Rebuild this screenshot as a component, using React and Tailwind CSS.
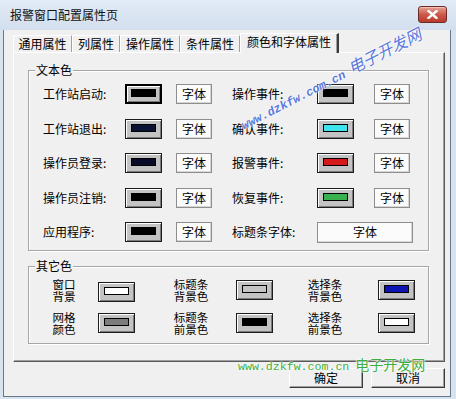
import React from 'react';

const leftRows = [
  { label: '工作站启动:', swatch: 'bg-[#000000]', focus: true, gap: '' },
  { label: '工作站退出:', swatch: 'bg-[#0c1232]', gap: 'mt-[15px]' },
  { label: '操作员登录:', swatch: 'bg-[#080c26]', gap: 'mt-[14px]' },
  { label: '操作员注销:', swatch: 'bg-[#000000]', gap: 'mt-[15px]' },
  { label: '应用程序:', swatch: 'bg-[#000000]', gap: 'mt-[14px]' },
];

const rightRows = [
  { label: '操作事件:', swatch: 'bg-[#000000]' },
  { label: '确认事件:', swatch: 'bg-[#3fe4ea]' },
  { label: '报警事件:', swatch: 'bg-[#d41a1a]' },
  { label: '恢复事件:', swatch: 'bg-[#38b24c]' },
];

function ColorBtn({ swatch, focus }) {
  return (
    <div
      className={`w-[37px] h-[20px] shrink-0 flex justify-center bg-[#c3c3c3] ${
        focus
          ? 'border-2 border-black pt-[3px] shadow-[inset_1px_1px_0_#ffffff,inset_-1px_-1px_0_#7a7a7a]'
          : 'border border-[#1c1c1c] pt-[4px] shadow-[inset_1px_1px_0_#ffffff,inset_-1px_-1px_0_#7a7a7a]'
      }`}
    >
      <div className={`w-[25px] h-[8px] border border-black ${swatch}`} />
    </div>
  );
}

function FontBtn({ wide }) {
  return (
    <div
      className={`${wide ? 'w-[96px] h-[21px]' : 'w-[36px] h-[20px]'} shrink-0 flex items-center justify-center border border-[#8e8e8e] bg-[#fbfbfb] shadow-[inset_-1px_-1px_0_#d6d6d6] leading-none`}
    >
      字体
    </div>
  );
}

function GroupBox({ title, className, children }) {
  return (
    <div className={`relative w-[401px] border border-[#a6a6a6] shadow-[inset_1px_1px_0_#ffffff,1px_1px_0_#ffffff] ${className}`}>
      <span className="absolute -top-[9px] left-[6px] px-[1px] bg-[#f0f0f0] leading-[16px]">{title}</span>
      {children}
    </div>
  );
}

function TwoLine({ a, b, w }) {
  return (
    <div className={`${w} h-[24px] shrink-0 flex flex-col items-center text-[11.5px] leading-[12px]`}>
      <span>{a}</span>
      <span>{b}</span>
    </div>
  );
}

function Tab({ label, w }) {
  return (
    <div className={`${w} h-[17px] flex items-center justify-center border-l border-t border-white border-r border-r-[#a0a0a0] shadow-[1px_0_0_#696969]`}>
      {label}
    </div>
  );
}

export default function App() {
  return (
    <div className="relative w-[456px] h-[399px] overflow-hidden flex flex-col bg-[#d8e3f0] font-['Noto_Sans_CJK_SC','Noto_Sans',sans-serif] text-[12px] text-black">
      {/* title bar */}
      <div className="h-[30px] shrink-0 flex items-center justify-between pl-[10px] pr-[9px] bg-gradient-to-b from-[#e2ebf6] to-[#d3dfee]">
        <span className="text-[12px] text-[#111] pb-[1px]">报警窗口配置属性页</span>
        <div className="w-[29px] h-[17px] mb-[2px] rounded-[3px] border border-[#6e2b24] bg-gradient-to-b from-[#e3a295] via-[#cb5a4b] to-[#b83a2c] flex items-center justify-center shadow-[inset_0_1px_0_#f0c0b6]">
          <svg width="11" height="9" viewBox="0 0 11 9">
            <path d="M1.5 1 L9.5 8 M9.5 1 L1.5 8" stroke="#ffffff" strokeWidth="2.4" strokeLinecap="square" />
          </svg>
        </div>
      </div>

      {/* client */}
      <div className="ml-[3px] w-[448px] h-[367px] border-x border-b border-[#66788c] bg-[#f0f0f0] pt-[3px] pl-[9px]">
        {/* tabs */}
        <div className="h-[19px] flex items-end">
          <Tab label="通用属性" w="w-[59px]" />
          <Tab label="列属性" w="w-[48px]" />
          <Tab label="操作属性" w="w-[60px]" />
          <Tab label="条件属性" w="w-[60px]" />
          <div className="relative z-10 w-[99px] h-[20px] -mb-[1px] flex items-center justify-center pb-[3px] bg-[#f0f0f0] border-l border-t border-white border-r-2 border-r-[#3c3c3c] shadow-[inset_-1px_0_0_#a0a0a0]">
            颜色和字体属性
          </div>
        </div>

        {/* page */}
        <div className="w-[432px] h-[310px] border border-t-white border-l-white border-r-[#5a5a5a] border-b-[#5a5a5a] shadow-[inset_-1px_-1px_0_#a0a0a0] pl-[14px] pt-[17px]">
          <GroupBox title="文本色" className="h-[181px] pt-[13px] pl-[14px]">
            {leftRows.map((r, i) => (
              <div key={r.label} className={`flex items-center h-[20px] ${r.gap}`}>
                <span className="w-[82px] shrink-0">{r.label}</span>
                <ColorBtn swatch={r.swatch} focus={r.focus} />
                <div className="ml-[14px]"><FontBtn /></div>
                <span className="ml-[20px] w-[85px] shrink-0">{i < 4 ? rightRows[i].label : '标题条字体:'}</span>
                {i < 4 ? (
                  <>
                    <ColorBtn swatch={rightRows[i].swatch} />
                    <div className="ml-[20px]"><FontBtn /></div>
                  </>
                ) : (
                  <FontBtn wide />
                )}
              </div>
            ))}
          </GroupBox>

          <GroupBox title="其它色" className="h-[78px] mt-[15px] pt-[11px] pl-[23px]">
            <div className="flex items-center h-[24px]">
              <TwoLine a="窗口" b="背景" w="w-[24px]" />
              <div className="ml-[22px] mt-[3px]"><ColorBtn swatch="bg-[#ffffff]" /></div>
              <div className="ml-[38px]"><TwoLine a="标题条" b="背景色" w="w-[36px]" /></div>
              <div className="ml-[27px]"><ColorBtn swatch="bg-[#c4c4c4]" /></div>
              <div className="ml-[34px]"><TwoLine a="选择条" b="背景色" w="w-[36px]" /></div>
              <div className="ml-[35px]"><ColorBtn swatch="bg-[#0c14b4]" /></div>
            </div>
            <div className="flex items-center h-[24px] mt-[9px]">
              <TwoLine a="网格" b="颜色" w="w-[24px]" />
              <div className="ml-[22px]"><ColorBtn swatch="bg-[#7c7c7c]" /></div>
              <div className="ml-[38px]"><TwoLine a="标题条" b="前景色" w="w-[36px]" /></div>
              <div className="ml-[27px]"><ColorBtn swatch="bg-[#000000]" /></div>
              <div className="ml-[34px]"><TwoLine a="选择条" b="前景色" w="w-[36px]" /></div>
              <div className="ml-[35px]"><ColorBtn swatch="bg-[#ffffff]" /></div>
            </div>
          </GroupBox>
        </div>

        {/* dialog buttons */}
        <div className="w-[432px] mt-[6px] flex justify-end gap-[8px]">
          <div className="w-[74px] h-[20px] flex items-center justify-center bg-[#f0f0f0] border border-t-white border-l-white border-r-[#3c3c3c] border-b-[#3c3c3c] shadow-[inset_-1px_-1px_0_#a0a0a0]">确定</div>
          <div className="w-[74px] h-[20px] flex items-center justify-center bg-[#f0f0f0] border border-t-white border-l-white border-r-[#3c3c3c] border-b-[#3c3c3c] shadow-[inset_-1px_-1px_0_#a0a0a0]">取消</div>
        </div>
      </div>

      {/* watermarks */}
      <div className="absolute left-[246px] top-[114px] origin-bottom-left -rotate-[27deg] whitespace-nowrap text-[#5a78dc] italic [text-shadow:0_0_2px_#ffffff,0_0_2px_#ffffff] leading-[16px]">
        <span className="font-['Liberation_Mono',monospace] text-[12px] font-bold">www.dzkfw.com.cn</span>
        <span className="ml-[6px] text-[16px]">电子开发网</span>
      </div>
      <div className="absolute left-[238px] top-[355px] whitespace-nowrap text-[#3cae3c] leading-[18px] [text-shadow:0_0_2px_#ffffff,0_0_2px_#ffffff,0_0_1px_#ffffff]">
        <span className="font-['Liberation_Mono',monospace] text-[11.6px]">www.dzkfw.com.cn</span>
        <span className="ml-[6px] text-[14px]">电子开发网</span>
      </div>
    </div>
  );
}
